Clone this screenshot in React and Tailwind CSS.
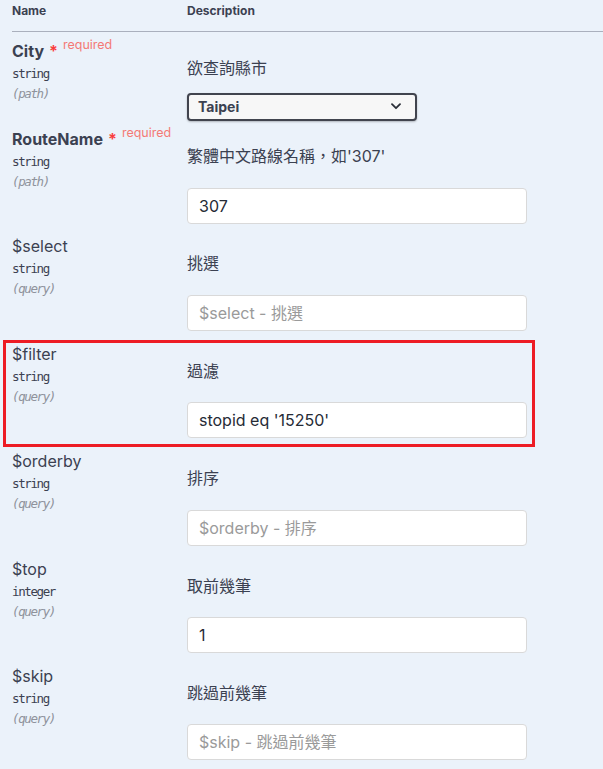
import React from "react";

const FONT = { fontFamily: 'Inter, "Noto Sans CJK TC", "Noto Sans", sans-serif' };
const MONO = { fontFamily: '"DejaVu Sans Mono", "Liberation Mono", monospace' };

const rows = [
  { name: "$select", type: "string", loc: "query", desc: "挑選", placeholder: "$select - 挑選" },
  { name: "$filter", type: "string", loc: "query", desc: "過濾", value: "stopid eq '15250'", boxed: true },
  { name: "$orderby", type: "string", loc: "query", desc: "排序", placeholder: "$orderby - 排序" },
  { name: "$top", type: "integer", loc: "query", desc: "取前幾筆", value: "1" },
  { name: "$skip", type: "string", loc: "query", desc: "跳過前幾筆", placeholder: "$skip - 跳過前幾筆" },
];

function NameCol({ name, required, type, loc }) {
  return (
    <div className="w-[175px] shrink-0 pt-[7px]">
      <div className="flex items-start text-[16px] leading-[24px] text-[#3b4151]">
        <span className={required ? "font-bold" : "font-normal"}>{name}</span>
        {required && (
          <>
            <span className="ml-[5px] font-bold text-[#f93e3e]">*</span>
            <span className="relative -top-[6px] ml-[5px] text-[12.5px] leading-[24px] text-[#f47a76]">required</span>
          </>
        )}
      </div>
      <div style={MONO} className="mt-[1px] text-[12.5px] leading-[20px] tracking-[-1.4px] font-normal text-[#3b4151]">
        {type}
      </div>
      <div style={MONO} className="text-[12.5px] leading-[20px] tracking-[-1.4px] font-normal italic text-[#8f939c]">
        ({loc})
      </div>
    </div>
  );
}

function TextInput({ value, placeholder }) {
  return (
    <input
      type="text"
      readOnly
      value={value ?? ""}
      placeholder={placeholder}
      style={FONT}
      className="mt-[19.5px] block h-[36px] w-[340px] rounded-[4px] border border-[#d9d9d9] bg-white px-[11px] text-[16px] text-[#262b36] outline-none placeholder:text-[#9a9a9a]"
    />
  );
}

export default function App() {
  return (
    <div style={FONT} className="min-h-[769px] w-[603px] overflow-hidden bg-[#ebf2fa] text-[#3b4151]">
      {/* header */}
      <div className="ml-3 flex h-[32px] border-b border-[#aab0bd] pt-[3px] text-[12px] font-bold leading-[16px]">
        <div className="w-[175px] shrink-0">Name</div>
        <div>Description</div>
      </div>

      {/* City */}
      <div className="flex h-[88px] pl-3">
        <NameCol name="City" required type="string" loc="path" />
        <div className="flex-1 pt-[23.5px]">
          <div className="text-[16px] leading-[24px]">欲查詢縣市</div>
          <div className="mt-[13px] flex h-[28px] w-[230px] items-center justify-between rounded-[4px] border-2 border-[#41444e] bg-[#f7f7f7] pl-[9px] pr-[14px] shadow-[0_1px_2px_rgba(0,0,0,0.25)]">
            <span className="text-[14px] font-bold text-[#3b4151]">Taipei</span>
            <svg width="10" height="7" viewBox="0 0 10 7" fill="none">
              <path d="M1 1.2 L5 5.2 L9 1.2" stroke="#2b2f38" strokeWidth="1.8" strokeLinecap="round" strokeLinejoin="round" />
            </svg>
          </div>
        </div>
      </div>

      {/* RouteName */}
      <div className="flex h-[107.4px] pl-3">
        <NameCol name="RouteName" required type="string" loc="path" />
        <div className="flex-1 pt-[24px]">
          <div className="text-[16px] leading-[24px]">繁體中文路線名稱，如'307'</div>
          <TextInput value="307" />
        </div>
      </div>

      {rows.map((r) => (
        <div key={r.name} className="relative flex h-[107.4px] pl-3">
          <NameCol name={r.name} type={r.type} loc={r.loc} />
          <div className="flex-1 pt-[24px]">
            <div className="text-[16px] leading-[24px]">{r.desc}</div>
            <TextInput value={r.value} placeholder={r.placeholder} />
          </div>
          {r.boxed && (
            <div className="pointer-events-none absolute left-[3px] top-[5.2px] h-[107px] w-[532px] border-[3px] border-[#ed1c24]" />
          )}
        </div>
      ))}
    </div>
  );
}
